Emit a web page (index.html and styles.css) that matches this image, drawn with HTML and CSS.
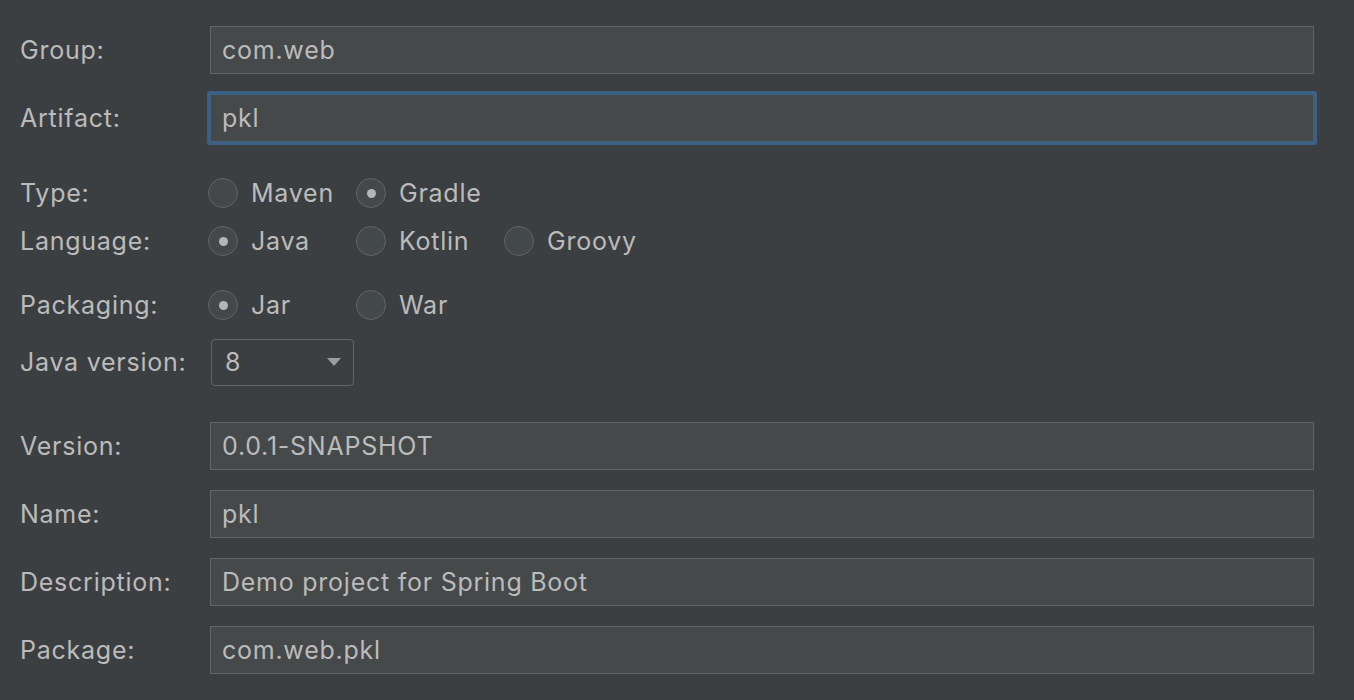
FILE: index.html
```html
<!DOCTYPE html>
<html>
<head>
<meta charset="utf-8">
<link rel="stylesheet" href="styles.css">
</head>
<body>
<div class="form">
  <div class="row r-group"><div class="label">Group:</div><div class="field">com.web</div></div>
  <div class="row r-artifact"><div class="label">Artifact:</div><div class="field focused">pkl</div></div>
  <div class="row r-type"><div class="label">Type:</div>
    <div class="radios">
      <div class="radio"><span class="circle"></span>Maven</div>
      <div class="radio"><span class="circle on"></span>Gradle</div>
    </div>
  </div>
  <div class="row r-lang"><div class="label">Language:</div>
    <div class="radios">
      <div class="radio"><span class="circle on"></span>Java</div>
      <div class="radio"><span class="circle"></span>Kotlin</div>
      <div class="radio"><span class="circle"></span>Groovy</div>
    </div>
  </div>
  <div class="row r-pack"><div class="label">Packaging:</div>
    <div class="radios">
      <div class="radio"><span class="circle on"></span>Jar</div>
      <div class="radio"><span class="circle"></span>War</div>
    </div>
  </div>
  <div class="row r-java"><div class="label">Java version:</div>
    <div class="combo"><span>8</span><span class="arrow"></span></div>
  </div>
  <div class="row r-version"><div class="label">Version:</div><div class="field">0.0.1-SNAPSHOT</div></div>
  <div class="row r-next"><div class="label">Name:</div><div class="field">pkl</div></div>
  <div class="row r-next"><div class="label">Description:</div><div class="field">Demo project for Spring Boot</div></div>
  <div class="row r-next"><div class="label">Package:</div><div class="field">com.web.pkl</div></div>
</div>
</body>
</html>
```
FILE: styles.css
```css
html, body {
  margin: 0;
  padding: 0;
  background: #3c3f41;
  height: 100%;
  overflow: hidden;
}
body {
  font-family: Inter, "Liberation Sans", sans-serif;
  font-size: 25px;
  letter-spacing: 0.75px;
  color: #bbbbbb;
}
.form {
  display: flex;
  flex-direction: column;
  padding-left: 20px;
  padding-right: 40px;
}
.row {
  display: flex;
  align-items: center;
  height: 48px;
}
.label {
  width: 190px;
  flex: none;
}
.field {
  flex: 1;
  height: 48px;
  box-sizing: border-box;
  border: 1px solid #646464;
  background: #45494a;
  padding-left: 11px;
  display: flex;
  align-items: center;
}
.field.focused {
  border-color: #3d6185;
  box-shadow: 0 0 0 3px #3d6185;
  border-radius: 1px;
}
.r-group { margin-top: 26px; }
.r-artifact { margin-top: 20px; }
.r-type { margin-top: 27px; }
.r-pack { margin-top: 16px; }
.r-java { margin-top: 9px; }
.r-version { margin-top: 36px; }
.r-next { margin-top: 20px; }

.radios {
  display: grid;
  grid-template-columns: repeat(3, 148px);
  margin-left: -2px;
}
.radio {
  display: flex;
  align-items: center;
}
.circle {
  width: 30px;
  height: 30px;
  box-sizing: border-box;
  border-radius: 50%;
  border: 1.5px solid #646464;
  background: #43494a;
  margin-right: 13px;
  display: flex;
  align-items: center;
  justify-content: center;
}
.circle.on::after {
  content: "";
  width: 9px;
  height: 9px;
  border-radius: 50%;
  background: #b5b5b5;
}
.combo {
  width: 143px;
  height: 47px;
  box-sizing: border-box;
  border: 1.5px solid #646464;
  border-radius: 4px;
  display: flex;
  align-items: center;
  justify-content: space-between;
  padding: 0 12px 0 13px;
  margin-left: 1px;
}
.arrow {
  width: 0;
  height: 0;
  border-left: 7px solid transparent;
  border-right: 7px solid transparent;
  border-top: 8px solid #9a9da0;
}
```
